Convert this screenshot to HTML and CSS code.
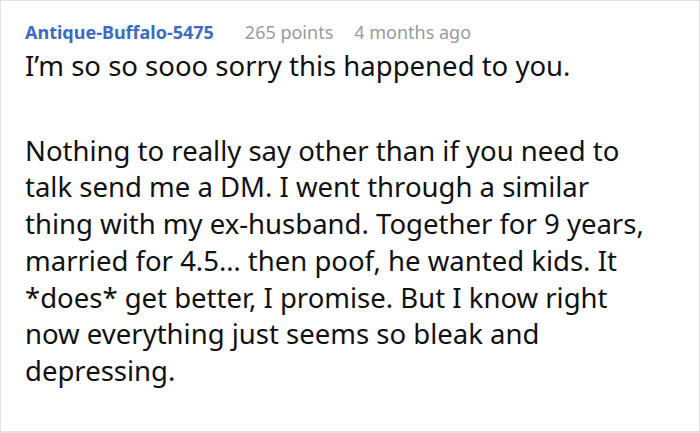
FILE: index.html
```html
<!DOCTYPE html>
<html>
<head>
<meta charset="utf-8">
<link rel="stylesheet" href="styles.css">
</head>
<body>
<div class="comment">
  <div class="meta">
    <span class="author">Antique-Buffalo-5475</span>
    <span class="info">265 points</span>
    <span class="info">4 months ago</span>
  </div>
  <div class="body">
    <p>I’m so so sooo sorry this happened to you.</p>
    <p>Nothing to really say other than if you need to<br>talk send me a DM. I went through a similar<br>thing with my ex-husband. Together for 9 years,<br>married for 4.5… then poof, he wanted kids. It<br>*does* get better, I promise. But I know right<br>now everything just seems so bleak and<br>depressing.</p>
  </div>
</div>
</body>
</html>
```
FILE: styles.css
```css
html, body {
  margin: 0;
  padding: 0;
  background: #fff;
}
.comment {
  box-sizing: border-box;
  width: 700px;
  height: 433px;
  border: 1px solid #e2e2e2;
  border-bottom-width: 2px;
  padding: 18px 0 0 24px;
  font-family: "Noto Sans", "Open Sans", sans-serif;
  overflow: hidden;
}
.meta {
  display: flex;
  gap: 21px;
  font-size: 18px;
  line-height: 26px;
  white-space: nowrap;
}
.author {
  color: #3b6cbf;
  font-weight: bold;
  margin-right: 10px;
}
.info {
  color: #9a9a9a;
}
.body {
  font-size: 27.5px;
  line-height: 36.7px;
  color: #111;
  white-space: nowrap;
}
.body p {
  margin: 3px 0 48px 0;
}
```
